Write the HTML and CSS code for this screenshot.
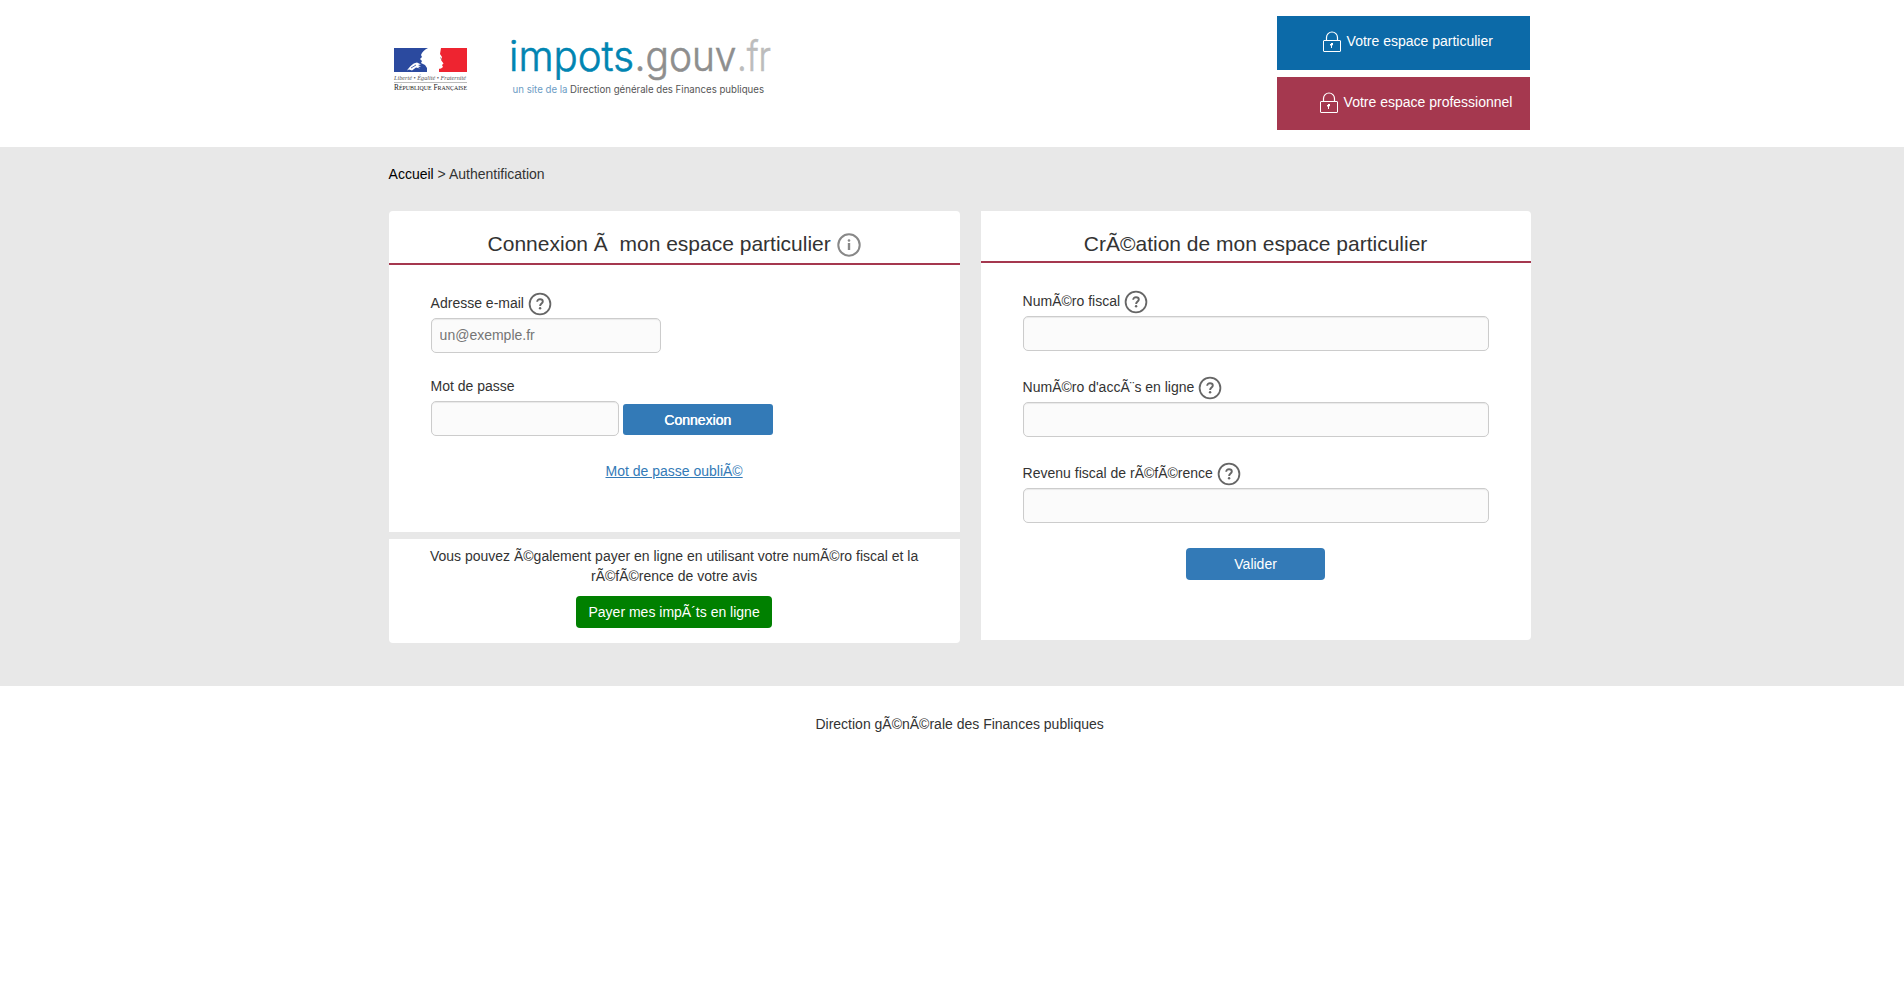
FILE: index.html
```html
<!DOCTYPE html>
<html lang="fr">
<head>
<meta charset="utf-8">
<title>Authentification</title>
<link rel="stylesheet" href="styles.css">
</head>
<body>
<svg class="defs" width="0" height="0" aria-hidden="true">
  <symbol id="lock" viewBox="0 0 18 22">
    <rect x="0.5" y="9.5" width="17" height="11" rx="0.5" fill="none" stroke="#fff"/>
    <path d="M3.5 9.5V6.5a5.5 5.5 0 0 1 11 0v3" fill="none" stroke="#fff" stroke-width="1.2"/>
    <path d="M7 13h1v-1h2v2l-1 .5V17H8v-2.5H7z" fill="#fff"/>
  </symbol>
  <symbol id="help" viewBox="0 0 24 24">
    <circle cx="12" cy="12" r="10.4" fill="none" stroke="#666" stroke-width="1.8"/>
    <path d="M9.2 9.8c0-1.6 1.2-2.6 2.8-2.6s2.8.9 2.8 2.3c0 2-2.7 2.1-2.7 4.5" fill="none" stroke="#666" stroke-width="1.9"/>
    <circle cx="12.1" cy="16.3" r="1.2" fill="#666"/>
  </symbol>
</svg>
<header class="header">
  <div class="container header-row">
    <svg class="flag" width="82" height="50" viewBox="0 0 82 50" role="img" aria-label="République Française">
      <rect x="5" y="5" width="34" height="24" fill="#2b4a9f"/>
      <rect x="50" y="5" width="28" height="24" fill="#ee2430"/>
      <path d="M39 5c-4 2-6 4-7 7l1 2-2 2 2 2-1 2 4 2 2 3v4h9c0-3 2-3 5-3.500l2-1.500-1-2 1.500-1.500-2.500-3.500 1-3-2-3 1-6z" fill="#fff"/>
      <path d="M51.500 14.500l1.500 2.500" stroke="#a77" stroke-width="1"/>
      <path d="M18 27.500c3-4 5-7 10-8l4 2-3 .5 3 1.500-3 .5 2 1.500-4-1-4 3-3-1z" fill="#fff"/>
      <path d="M22 25l5-3" stroke="#2b4a9f" stroke-width=".8"/>
      <text class="motto" x="5" y="37" textLength="72" lengthAdjust="spacingAndGlyphs">Liberté • Égalité • Fraternité</text>
      <path d="M5 39.500h73" stroke="#aaa" stroke-width=".8"/>
      <text class="republic" x="5" y="47" textLength="73" lengthAdjust="spacingAndGlyphs">R<tspan class="sc">ÉPUBLIQUE</tspan> F<tspan class="sc">RANÇAISE</tspan></text>
    </svg>
    <svg class="brand" width="270" height="72" viewBox="0 0 270 72" role="img" aria-label="impots.gouv.fr">
      <text class="name blue" x="4" y="45" textLength="125" lengthAdjust="spacingAndGlyphs">impots</text>
      <text class="name grey" x="129.500" y="45" textLength="102" lengthAdjust="spacingAndGlyphs">.gouv</text>
      <text class="name light" x="232" y="45" textLength="34" lengthAdjust="spacingAndGlyphs">.fr</text>
      <text class="tag tag-blue" x="7.500" y="67" textLength="55" lengthAdjust="spacingAndGlyphs">un site de la</text>
      <text class="tag" x="65" y="67" textLength="194" lengthAdjust="spacingAndGlyphs">Direction générale des Finances publiques</text>
    </svg>
    <nav class="spaces">
      <a class="space particulier"><svg width="18" height="22"><use href="#lock"/></svg><span>Votre espace particulier</span></a>
      <a class="space professionnel"><svg width="18" height="22"><use href="#lock"/></svg><span>Votre espace professionnel</span></a>
    </nav>
  </div>
</header>
<main class="main">
  <div class="container">
    <div class="crumbs"><a>Accueil</a> &gt; Authentification</div>
    <div class="columns">
      <div class="left">
        <section class="card login">
          <h1 class="title">Connexion Ã&nbsp; mon espace particulier <svg class="info" width="24" height="24" viewBox="0 0 24 24"><circle cx="12" cy="12" r="10.700" fill="none" stroke="#888" stroke-width="2"/><path d="M12 10v7" stroke="#888" stroke-width="2.400"/><circle cx="12" cy="7.500" r="1.300" fill="#888"/></svg></h1>
          <div class="fields">
            <label class="label">Adresse e-mail <svg width="24" height="24"><use href="#help"/></svg></label>
            <input class="input email" type="text" placeholder="un@exemple.fr">
            <label class="label password-label">Mot de passe</label>
            <div class="password-row"><input class="input password" type="password"><button class="btn connect">Connexion</button></div>
            <a class="forgot">Mot de passe oubliÃ©</a>
          </div>
        </section>
        <section class="card pay">
          <p>Vous pouvez Ã©galement payer en ligne en utilisant votre numÃ©ro fiscal et la rÃ©fÃ©rence de votre avis</p>
          <button class="btn green">Payer mes impÃ´ts en ligne</button>
        </section>
      </div>
      <section class="card create">
        <h1 class="title">CrÃ©ation de mon espace particulier</h1>
        <div class="fields">
          <label class="label">NumÃ©ro fiscal <svg width="24" height="24"><use href="#help"/></svg></label>
          <input class="input" type="text">
          <label class="label">NumÃ©ro d'accÃ¨s en ligne <svg width="24" height="24"><use href="#help"/></svg></label>
          <input class="input" type="text">
          <label class="label">Revenu fiscal de rÃ©fÃ©rence <svg width="24" height="24"><use href="#help"/></svg></label>
          <input class="input" type="text">
          <button class="btn validate">Valider</button>
        </div>
      </section>
    </div>
  </div>
</main>
<footer class="footer container">Direction gÃ©nÃ©rale des Finances publiques</footer>
</body>
</html>
```

FILE: styles.css
```css
* { box-sizing: border-box; }
body {
  margin: 0;
  font: 14px/20px "Liberation Sans", Arial, sans-serif;
  color: #333;
  background: #fff;
}
.defs { display: none; }
.container { width: 1142px; margin-left: 388.6px; }
.header { height: 147px; }
.header-row { display: flex; align-items: flex-start; }
.flag { margin-top: 43px; overflow: visible; }
.brand { margin: 26px 0 0 34px; overflow: visible; }
.motto { font: italic 7px "Liberation Serif", serif; fill: #555; }
.republic { font: 7.5px "Liberation Serif", serif; fill: #222; }
.sc { font-size: 6px; }
.name { font: 300 42px Inter, sans-serif; stroke-width: .6; }
.blue { fill: #0085b2; stroke: #0085b2; }
.grey { fill: #8e8e8e; stroke: #8e8e8e; }
.light { fill: #bcbcbc; stroke: #bcbcbc; }
.tag { font: 10px Inter, sans-serif; fill: #555; }
.tag-blue { fill: #6b9cc4; }
.spaces { width: 253px; margin: 16px 1px 0 auto; display: grid; gap: 7px; }
.space { display: flex; align-items: flex-start; gap: 6px; color: #fff; }
.particulier { height: 54px; padding: 15px 0 0 46px; background: #0c6aa8; }
.professionnel { height: 53px; padding: 15px 0 0 43px; background: #a5384f; }
.main { height: 539px; background: #e8e8e8; }
.crumbs { padding-top: 17px; height: 64px; }
.crumbs a { color: #000; }
.columns { display: flex; align-items: flex-start; gap: 21px; }
.left { width: 571px; display: grid; gap: 7px; }
.card { background: #fff; }
.login { height: 321px; border-radius: 4px 4px 0 0; }
.create { width: 550px; height: 429px; border-radius: 0 4px 4px 0; }
.title {
  margin: 0;
  font-size: 21px;
  font-weight: 400;
  line-height: 23px;
  text-align: center;
  border-bottom: 2px solid #a5384f;
}
.login .title { height: 54px; padding: 21px 0 0; }
.create .title { height: 52px; padding: 21px 0 0; }
.info { vertical-align: -6px; }
.fields { display: flex; flex-direction: column; padding: 26px 42px 0; }
.label { display: flex; align-items: center; gap: 4px; height: 27px; padding-bottom: 4px; }
.label svg { margin-top: 2px; }
.input {
  width: 100%;
  height: 35px;
  padding: 0 8px 1px;
  border: 1px solid #ccc;
  border-radius: 5px;
  background: #fbfbfb;
  box-shadow: inset 0 1px 1px rgba(0,0,0,.075);
  font: inherit;
  color: #555;
}
.input::placeholder { color: #757575; opacity: 1; }
.email { width: 230px; }
.password-label { height: 20px; margin: 23px 0 5px; padding: 0; }
.password-row { display: flex; align-items: flex-start; gap: 4px; }
.password { width: 188px; }
.btn { padding: 0; border: 0; border-radius: 4px; background: #337ab7; color: #fff; font: inherit; text-align: center; }
.connect { width: 150px; height: 31px; margin-top: 3px; border-radius: 3px; text-shadow: .4px 0 0 #fff; }
.forgot { align-self: center; margin-top: 25px; color: #337ab7; text-decoration: underline; }
.pay { height: 104px; padding: 7px 35px 0; text-align: center; border-radius: 0 0 4px 4px; }
.pay p { margin: 0 0 10px; }
.green { width: 196px; height: 32px; background: #008000; }
.create .input { margin-bottom: 24px; }
.validate { align-self: center; width: 139px; height: 32px; margin-top: 1px; }
.footer { padding-top: 28px; text-align: center; }
```
